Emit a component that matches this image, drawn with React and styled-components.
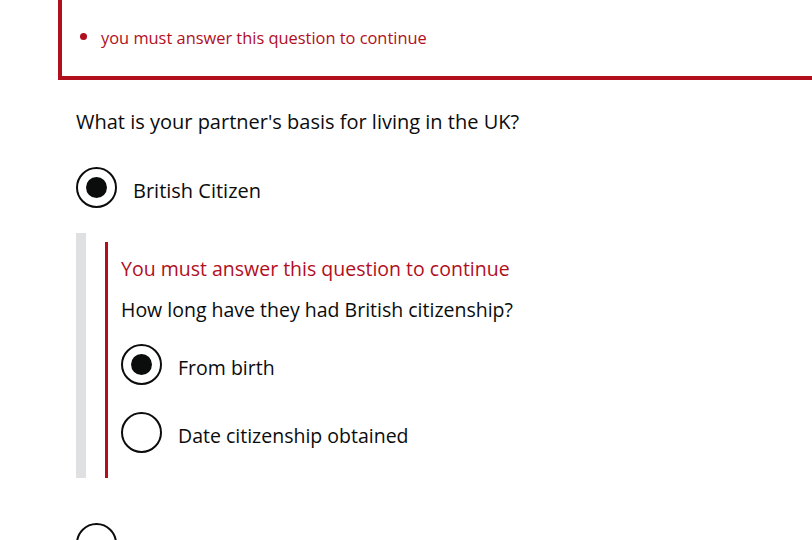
import React from "react";
import styled, { createGlobalStyle } from "styled-components";

const Global = createGlobalStyle`
  html, body { margin: 0; padding: 0; overflow: hidden; background: #fff; }
  body {
    font-family: "Open Sans", "Liberation Sans", Arial, sans-serif;
    color: #0b0c0c;
    -webkit-font-smoothing: antialiased;
  }
`;

const RED = "#b10e1e";

const Page = styled.div`
  width: 812px;
  height: 540px;
  overflow: hidden;
  padding-left: 58px;
  box-sizing: border-box;
`;

const ErrorSummary = styled.div`
  border: 4px solid ${RED};
  border-top: none;
  margin-right: -30px;
  padding: 26px 0 26px 18px;
`;

const ErrorList = styled.ul`
  list-style: none;
  margin: 0;
  padding: 0;
`;

const ErrorItem = styled.li`
  display: flex;
  align-items: center;
  gap: 14px;
  color: ${RED};
  font-size: 16.4px;
  line-height: 24px;
`;

const Dot = styled.span`
  width: 7px;
  height: 7px;
  border-radius: 50%;
  background: ${RED};
  flex-shrink: 0;
  margin-top: -3px;
`;

const Form = styled.div`
  padding: 30px 0 0 18px;
  font-size: 20px;
`;

const Question = styled.p`
  margin: 0 0 ${(p) => p.$gap || 0}px;
  font-size: inherit;
  line-height: 24px;
`;

const Radios = styled.div`
  display: flex;
  flex-direction: column;
  gap: ${(p) => p.$gap || 26}px;
`;

const RadioRow = styled.label`
  display: flex;
  align-items: center;
  gap: 16px;
  font-size: inherit;
  line-height: 24px;
`;

const Circle = styled.span`
  width: 41px;
  height: 41px;
  box-sizing: border-box;
  border: 2px solid #0b0c0c;
  border-radius: 50%;
  display: flex;
  align-items: center;
  justify-content: center;
  flex-shrink: 0;

  &::after {
    content: "";
    width: 21px;
    height: 21px;
    border-radius: 50%;
    background: #0b0c0c;
    display: ${(p) => (p.$checked ? "block" : "none")};
  }
`;

const RadioText = styled.span`
  padding-top: 6px;
`;

const Conditional = styled.div`
  margin: 25px 0 45px 0;
  border-left: 10px solid #dee0e2;
  padding: 9px 0 0 19px;
`;

const ErrorGroup = styled.div`
  border-left: 3px solid ${RED};
  padding: 15px 0 25px 13px;
  font-size: 19.5px;
`;

const ErrorMessage = styled.p`
  margin: 0 0 17px;
  color: ${RED};
  line-height: 24px;
`;

function Radio({ checked, children }) {
  return (
    <RadioRow>
      <Circle $checked={checked} />
      {children && <RadioText>{children}</RadioText>}
    </RadioRow>
  );
}

export default function App() {
  return (
    <>
      <Global />
      <Page>
        <ErrorSummary>
          <ErrorList>
            <ErrorItem>
              <Dot />
              you must answer this question to continue
            </ErrorItem>
          </ErrorList>
        </ErrorSummary>
        <Form>
          <Question $gap={33}>What is your partner's basis for living in the UK?</Question>
          <Radio checked>British Citizen</Radio>
          <Conditional>
            <ErrorGroup>
              <ErrorMessage>You must answer this question to continue</ErrorMessage>
              <Question $gap={22}>How long have they had British citizenship?</Question>
              <Radios $gap={27}>
                <Radio checked>From birth</Radio>
                <Radio>Date citizenship obtained</Radio>
              </Radios>
            </ErrorGroup>
          </Conditional>
          <Radio />
        </Form>
      </Page>
    </>
  );
}
